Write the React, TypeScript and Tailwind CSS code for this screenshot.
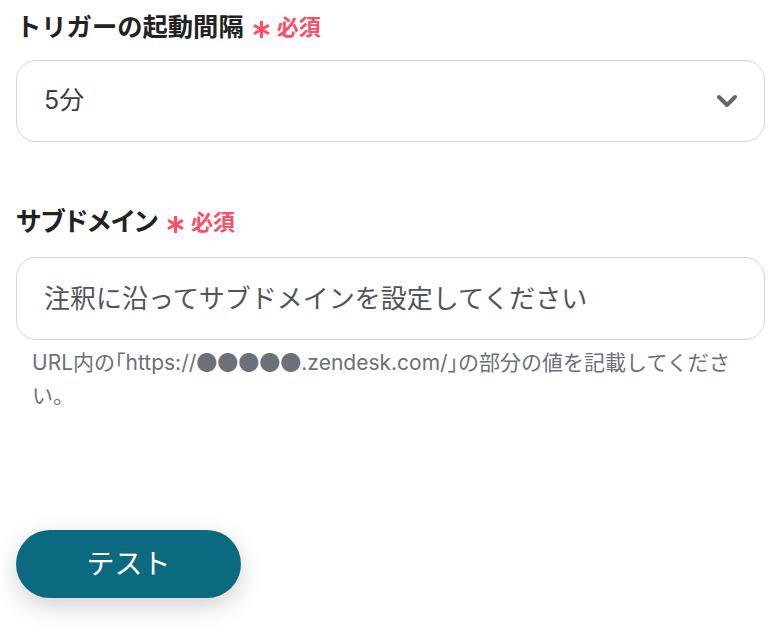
const font = { fontFamily: 'Inter, "Noto Sans CJK JP", sans-serif' };

function Asterisk() {
  return (
    <svg width="19" height="19" viewBox="0 0 20 20" className="mt-[4px]" aria-hidden>
      <g stroke="#ff4d66" strokeWidth="3.2" strokeLinecap="butt">
        <line x1="10" y1="1" x2="10" y2="19" />
        <line x1="2.2" y1="5.5" x2="17.8" y2="14.5" />
        <line x1="2.2" y1="14.5" x2="17.8" y2="5.5" />
      </g>
    </svg>
  );
}

function Label({ text, tight }: { text: string; tight?: boolean }) {
  return (
    <div className="h-[30px] flex items-center gap-2">
      <span
        className={
          tight
            ? "text-[26px] font-bold text-[#222222] leading-none [font-feature-settings:'palt']"
            : "text-[25.3px] font-bold text-[#222222] leading-none"
        }
      >
        {text}
      </span>
      <span className="flex items-center gap-[6px] text-[#ff4d66]">
        <Asterisk />
        <span className="text-[22px] font-bold leading-none">必須</span>
      </span>
    </div>
  );
}

export default function App() {
  return (
    <div className="w-[781px] h-[635px] bg-white px-4" style={font}>
      <div className="pt-[12px]">
        <Label text="トリガーの起動間隔" />
      </div>

      <div className="mt-[18px] h-[82px] rounded-[20px] border border-[#d4d7dd] flex items-center justify-between pl-[27px] pr-[26px]">
        <span className="text-[25px] text-[#3a3f47]">5分</span>
        <svg width="22" height="14" viewBox="0 0 22 14" aria-hidden>
          <polyline points="3,3 11,11 19,3" fill="none" stroke="#666666" strokeWidth="4" strokeLinecap="round" strokeLinejoin="round" />
        </svg>
      </div>

      <div className="mt-[65px]">
        <Label text="サブドメイン" tight />
      </div>

      <div className="mt-[20px] h-[83px] rounded-[20px] border border-[#d4d7dd] flex items-center pl-[27px]">
        <span className="text-[26px] text-[#50555c]">注釈に沿ってサブドメインを設定してください</span>
      </div>

      <p className="mt-[5px] pl-4 text-[21px] leading-[33px] text-[#6b7079]">
        URL内の<span className="[font-feature-settings:'halt']">「</span>https://
        <span className="[font-family:'Noto_Sans_CJK_JP',sans-serif]">●●●●●</span>
        .zendesk.com/<span className="[font-feature-settings:'halt']">」</span>の部分の値を記載してください。
      </p>

      <button className="mt-[118px] w-[225px] h-[68px] rounded-full bg-[#0b6a80] text-white text-[28px] shadow-[0_8px_24px_rgba(0,0,0,0.18)]">
        テスト
      </button>
    </div>
  );
}
